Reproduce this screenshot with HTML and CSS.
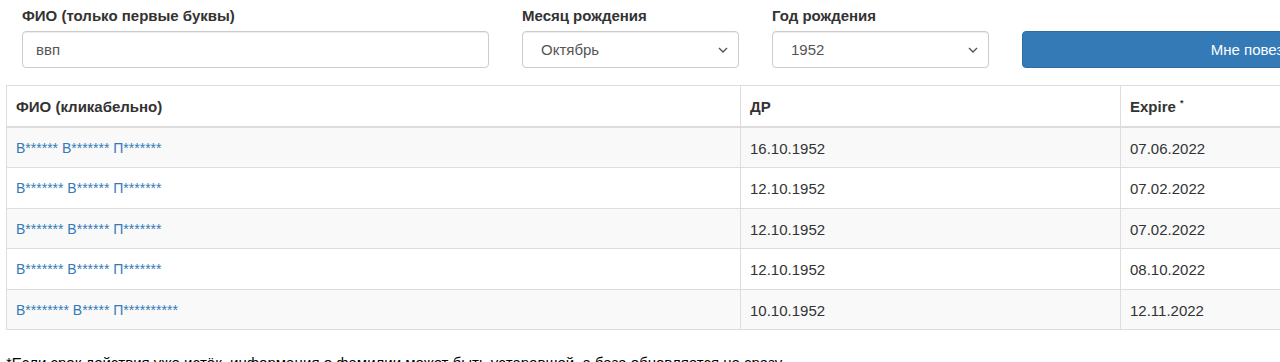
FILE: index.html
```html
<!doctype html>
<html>
<head>
<meta charset="UTF-8">
<title>Поиск</title>
<link rel="stylesheet" href="styles.css">
</head>
<body>
    <div class="stranitsa">
        <div class="poisk">
            <div class="pole pole-shirokoe">
                <label class="podpis">ФИО (только первые буквы)</label>
                <input type="text" class="vvod" value="ввп">
            </div>
            <div class="pole pole-uzkoe">
                <label class="podpis">Месяц рождения</label>
                <select class="vybor">
                    <option>Октябрь</option>
                </select>
            </div>
            <div class="pole pole-uzkoe">
                <label class="podpis">Год рождения</label>
                <select class="vybor">
                    <option>1952</option>
                </select>
            </div>
            <div class="pole pole-shirokoe">
                <div class="podpis">&nbsp;</div>
                <button class="knopka">Мне повезло</button>
            </div>
        </div>

        <table class="tablitsa">
            <thead>
                <tr>
                    <th class="kolonka-fio">ФИО (кликабельно)</th>
                    <th class="kolonka-dr">ДР</th>
                    <th>Expire <sup>*</sup></th>
                </tr>
            </thead>
            <tbody>
                <tr>
                    <td><a href="#">В****** В******* П*******</a></td>
                    <td>16.10.1952</td>
                    <td>07.06.2022</td>
                </tr>
                <tr>
                    <td><a href="#">В******* В****** П*******</a></td>
                    <td>12.10.1952</td>
                    <td>07.02.2022</td>
                </tr>
                <tr>
                    <td><a href="#">В******* В****** П*******</a></td>
                    <td>12.10.1952</td>
                    <td>07.02.2022</td>
                </tr>
                <tr>
                    <td><a href="#">В******* В****** П*******</a></td>
                    <td>12.10.1952</td>
                    <td>08.10.2022</td>
                </tr>
                <tr>
                    <td><a href="#">В******** В***** П**********</a></td>
                    <td>10.10.1952</td>
                    <td>12.11.2022</td>
                </tr>
            </tbody>
        </table>

        <p class="primechanie">*Если срок действия уже истёк, информация о фамилии может быть устаревшей, а база обновляется не сразу</p>
    </div>
</body>
</html>
```

FILE: styles.css
```css
body {
    margin: 0;
    overflow: hidden;
    background-color: #fff;
    color: #333;
    font-family: "Liberation Sans", Arial, sans-serif;
    font-size: 15px;
    line-height: 20px;
}

.stranitsa {
    width: 1500px;
    padding: 6px 0 0 6px;
}

.poisk {
    display: flex;
}

.pole {
    padding: 0 17px 0 16px;
    box-sizing: border-box;
}

.pole-shirokoe {
    width: 500px;
}

.pole-uzkoe {
    width: 250px;
}

.podpis {
    display: block;
    font-weight: bold;
    margin-bottom: 5px;
}

.vvod,
.vybor,
.knopka {
    display: block;
    width: 100%;
    height: 37px;
    box-sizing: border-box;
    border: 1px solid #ccc;
    border-radius: 4px;
    font-family: "Liberation Sans", Arial, sans-serif;
    font-size: 15px;
    color: #555;
    background-color: #fff;
    box-shadow: inset 0 1px 1px rgba(0, 0, 0, 0.075);
}

.vvod {
    padding: 6px 13px;
}

.vybor {
    appearance: none;
    -webkit-appearance: none;
    padding: 6px 30px 6px 18px;
    background-image: url("data:image/svg+xml;utf8,<svg xmlns='http://www.w3.org/2000/svg' width='10' height='6' viewBox='0 0 10 6'><path d='M1 1l4 4 4-4' fill='none' stroke='%23555' stroke-width='1.4'/></svg>");
    background-repeat: no-repeat;
    background-position: right 10px center;
}

.knopka {
    background-color: #337ab7;
    border-color: #2e6da4;
    color: #fff;
    box-shadow: none;
    text-align: center;
}

.tablitsa {
    width: 1494px;
    margin-top: 17px;
    border-collapse: collapse;
    border: 1px solid #ddd;
}

.tablitsa th,
.tablitsa td {
    height: 20px;
    padding: 10px 9px 10px 9px;
    border: 1px solid #ddd;
    text-align: left;
    vertical-align: middle;
    line-height: 19px;
}

.tablitsa td {
    padding-bottom: 9px;
}

/* строки чуть выше через одну, как в оригинале */
.tablitsa tbody tr:nth-child(even) td {
    padding-bottom: 10px;
}

.tablitsa th {
    border-bottom-width: 2px;
    font-weight: bold;
}

.tablitsa tbody tr:nth-child(odd) {
    background-color: #f9f9f9;
}

.kolonka-fio {
    width: 715px;
}

.kolonka-dr {
    width: 361px;
}

.tablitsa sup {
    font-size: 9px;
    line-height: 0;
    vertical-align: 6px;
}

.tablitsa a {
    color: #337ab7;
    text-decoration: none;
    font-size: 14px;
    vertical-align: top;
}

.primechanie {
    margin: 23px 0 0 0;
    color: #000;
}
```
